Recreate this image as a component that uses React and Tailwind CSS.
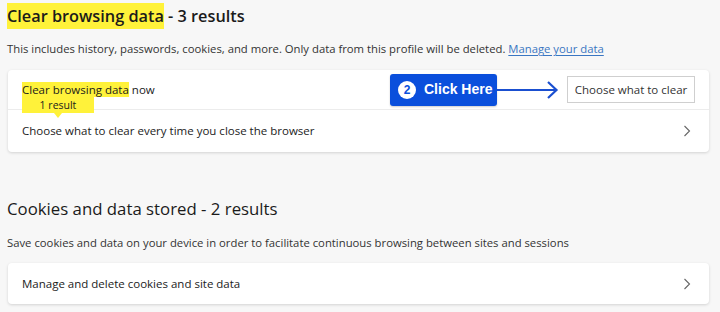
import React from "react";

const Chevron = () => (
  <svg width="8" height="12" viewBox="0 0 8 12" className="text-[#666]">
    <path d="M1.5 1 L6.5 6 L1.5 11" fill="none" stroke="currentColor" strokeWidth="1.1" />
  </svg>
);

export default function App() {
  return (
    <div className="w-[720px] h-[312px] bg-[#f7f7f7] overflow-hidden text-[#1a1a1a]" style={{ fontFamily: '"Open Sans", "Noto Sans", sans-serif' }}>
      <div className="pl-[7px] pr-[11px] pt-[4px]">
        <h1 className="text-[16.3px] leading-[24px] font-semibold text-[#1b1b1b]">
          <span className="bg-[#fff23a] py-[2px]">Clear browsing data</span> - 3 results
        </h1>
        <p className="mt-[13px] text-[11.3px] leading-[16px] text-[#333]">
          This includes history, passwords, cookies, and more. Only data from this profile will be deleted.{" "}
          <span className="text-[#3a76c2] underline underline-offset-2">Manage your data</span>
        </p>

        <div className="mt-[13px] ml-[1px] bg-white rounded-[4px] shadow-[0_1px_3px_rgba(0,0,0,0.15)]">
          <div className="h-[40px] flex items-center pl-[14px] pr-[14px] border-b border-[#ececec] relative">
            <div className="relative text-[11.5px] leading-[16px] text-[#1b1b1b] font-medium">
              <span className="bg-[#fff23a]">Clear browsing data</span> now
              <div className="absolute left-0 top-[15px] w-[72px] h-[16px] bg-[#fff23a] text-[10.5px] leading-[16px] text-center font-normal z-10">
                1 result
                <div className="absolute left-[32px] top-[16px] w-0 h-0 border-l-[4px] border-r-[4px] border-t-[5px] border-l-transparent border-r-transparent border-t-[#fff23a]" />
              </div>
            </div>
            <div className="ml-auto flex items-center">
              <div className="h-[32px] w-[107px] bg-[#0a4fdc] rounded-[3px] flex items-center pl-[8px] gap-[8px] shadow-[0_1px_2px_rgba(0,0,0,0.2)]">
                <div className="w-[18px] h-[18px] rounded-full bg-white text-[#0a4fdc] text-[12px] font-bold flex items-center justify-center" style={{ fontFamily: '"Liberation Sans", Arial, sans-serif' }}>2</div>
                <span className="text-white text-[14px] font-bold" style={{ fontFamily: '"Liberation Sans", Arial, sans-serif' }}>Click Here</span>
              </div>
              <svg width="62" height="20" viewBox="0 0 62 20" className="text-[#1a4fd0]">
                <path d="M0 10 H59" stroke="currentColor" strokeWidth="2" />
                <path d="M51 2 L59.5 10 L51 18" fill="none" stroke="currentColor" strokeWidth="2.2" />
              </svg>
              <div className="ml-[8px] h-[27px] w-[128px] border border-[#cfcfcf] bg-white flex items-center justify-center text-[11.5px] text-[#333]">
                Choose what to clear
              </div>
            </div>
          </div>
          <div className="h-[42px] flex items-center pl-[14px] pr-[18px] text-[11.5px] font-medium text-[#1b1b1b]">
            Choose what to clear every time you close the browser
            <div className="ml-auto"><Chevron /></div>
          </div>
        </div>

        <h2 className="mt-[45px] text-[16.8px] leading-[24px] font-medium text-[#1b1b1b]">
          Cookies and data stored - 2 results
        </h2>
        <p className="mt-[14px] text-[11.3px] leading-[16px] text-[#333]">
          Save cookies and data on your device in order to facilitate continuous browsing between sites and sessions
        </p>
        <div className="mt-[12px] ml-[1px] h-[41px] bg-white rounded-[4px] shadow-[0_1px_3px_rgba(0,0,0,0.15)] flex items-center pl-[14px] pr-[18px] text-[11.5px] font-medium text-[#1b1b1b]">
          Manage and delete cookies and site data
          <div className="ml-auto"><Chevron /></div>
        </div>
      </div>
    </div>
  );
}
